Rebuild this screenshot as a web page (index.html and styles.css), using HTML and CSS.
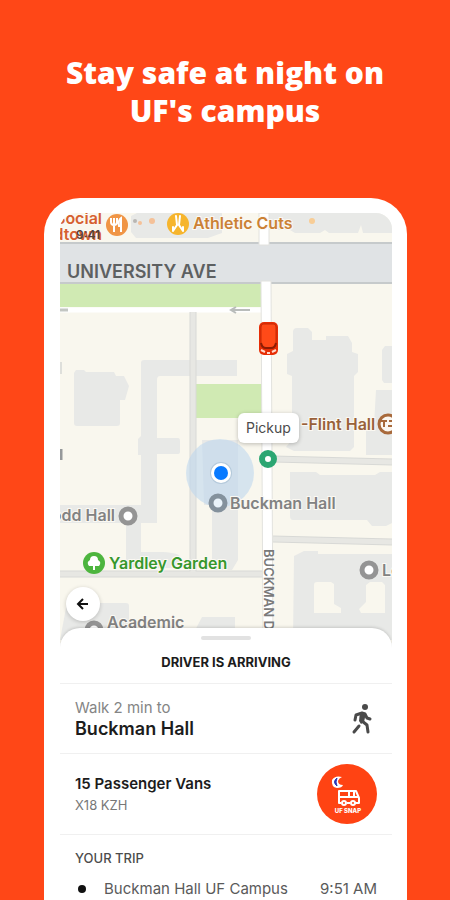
FILE: index.html
```html
<!DOCTYPE html>
<html lang="en">
<head>
<meta charset="utf-8">
<meta name="viewport" content="width=device-width, initial-scale=1">
<title>Stay safe at night on UF's campus</title>
<link rel="stylesheet" href="styles.css">
</head>
<body>
<main class="promo">
  <h1 class="headline">Stay safe at night on UF's campus</h1>
  <section class="phone">
    <div class="screen">
      <div class="map">
        <svg class="map-art" viewBox="60 213 332 430" preserveAspectRatio="xMidYMin slice" role="img" aria-label="Campus map">
          <rect x="0" y="200" width="500" height="460" fill="#f9f7ee"/>
          <!-- buildings -->
          <g fill="#e8e9e7">
            <path d="M137 213H222V233L208 238H136L131 232V216Z"/>
            <path d="M267 213H392V233H363L361 225L358 233H329L325 230L320 233H295L290 230H267Z"/>
            <path d="M76 370H84L86 372H114L116 376H124L129 386L125 400H120V423Q120 426 117 426H77Q74 426 74 423V373Z"/>
            <path d="M144 360H237V376H160Q157 376 157 380V438H178Q180 438 180 441V452Q180 454 177 454H157V523H141V552H163Q180 553 180 557V568H126V523H60V505H141V455H138V439L141 436V363Q141 360 144 360Z"/>
            <path d="M202 440H238V560L232 570H212V505H204Z"/>
            <path d="M293 332Q293 328 297 328H308L312 332V340H326V336H348L352 343V352L358 354V372L354 376V447L350 451H294L286 447L292 440V376L287 374V354L293 351Z"/>
            <path d="M382 350L385 346H392V383H384L382 380Z"/>
            <path d="M376 390H392V455H366V427L374 425Z"/>
            <path d="M290 472H316L320 475H375L380 472H392V523L386 526H372L367 520H293Q290 520 290 516Z"/>
            <path fill-rule="evenodd" d="M294 556L304 551H318V554H392V640H293ZM317 582Q314 582 314 585V613H341V608L334 604V584L331 582ZM370 582L366 585V602L359 609L361 613H385V585L382 582Z"/>
            <path d="M66 608Q66 603 71 603H126Q129 603 129 606V640H60Z"/>
            <path d="M202 617H235V640H190Z"/>
          </g>
          <!-- lawns -->
          <path d="M60 283H261V307H60Z" fill="#d0eab3"/>
          <path d="M196 384H263V418H196Z" fill="#d0eab3"/>
          <!-- paths -->
          <path d="M60 310H262" stroke="#fff" stroke-width="5"/>
          <path d="M60 310H68" stroke="#c3c6c2" stroke-width="3"/>
          <g fill="none" stroke="#d8d9d6" stroke-width="7">
            <path d="M193 312V574"/><path d="M60 574H263"/><path d="M273 459L392 462"/><path d="M273 539L392 542"/>
          </g>
          <g fill="none" stroke="#e7e7e3" stroke-width="5">
            <path d="M193 312V574"/><path d="M60 574H263"/><path d="M273 459L392 462"/><path d="M273 539L392 542"/>
          </g>
          <!-- avenue -->
          <path d="M60 244H392V283H60Z" fill="#e0e3e5"/>
          <path d="M60 243H392M60 283H392" stroke="#c6cacb" stroke-width="2"/>
          <!-- Buckman Drive -->
          <path d="M259 213H269V245H259ZM261 281H271L273 640H263Z" fill="#fff" stroke="#e2e2de"/>
          <path d="M60 449V460" stroke="#96999a" stroke-width="5"/>
          <path d="M60 362V374" stroke="#dedfdb" stroke-width="4"/>
          <path d="M250 310H232M236 307L231 310L236 313" fill="none" stroke="#b9bcba" stroke-width="2"/>

          <!-- location halo -->
          <circle cx="220" cy="473" r="34" fill="#b9d5ee" fill-opacity=".55"/>

          <!-- place markers -->
          <g class="place place-food">
            <text x="102" y="224" text-anchor="end">Social</text>
            <text x="102" y="240" text-anchor="end">dtown</text>
          </g>
          <text class="clock" x="76" y="239">9:41</text>
          <circle cx="117" cy="225" r="11" fill="#f09545"/>
          <path d="M114 218V232M111 218V222Q111 225 114 225Q117 225 117 222V218M121 232V218Q118 220 119 226H121" fill="none" stroke="#fff" stroke-width="2"/>
          <circle cx="135" cy="221" r="2" fill="#b9b6b2"/><circle cx="140" cy="223" r="2" fill="#f5c198"/><circle cx="152" cy="221" r="3" fill="#f5c198"/><circle cx="312" cy="221" r="3" fill="#f8cd96"/>
          <circle cx="178" cy="224" r="11" fill="#f6b52d"/>
          <path d="M176 216L177 225L173 231M180 216L179 225L183 231M173 227V231M183 227V231" fill="none" stroke="#fff" stroke-width="2" stroke-linecap="round"/>
          <text class="place place-shop" x="193" y="229">Athletic Cuts</text>
          <text class="road" x="67" y="278">UNIVERSITY AVE</text>
          <text class="street" transform="translate(264 549) rotate(90)">BUCKMAN DR</text>

          <text class="place place-hall" x="301" y="430">-Flint Hall</text>
          <circle cx="388" cy="424" r="9" fill="#fbf7f1" stroke="#a8693b" stroke-width="3"/>
          <path d="M381 421H387M384 421V427M388 426H394M389 421H394" stroke="#a8693b" stroke-width="2"/>
          <g class="place place-gray">
            <text x="230" y="509">Buckman Hall</text>
            <text x="115" y="521" text-anchor="end">Rodd Hall</text>
            <text x="107" y="628">Academic</text>
            <text x="382" y="576">Leigh</text>
          </g>
          <g fill="#fff" stroke="#949494" stroke-width="5">
            <circle cx="128" cy="516" r="7"/><circle cx="369" cy="570" r="7"/><circle cx="94" cy="630" r="7"/>
            <circle cx="218" cy="503" r="7" stroke="#84919c" fill="#eaf3fa"/>
          </g>
          <text class="place place-garden" x="109" y="569">Yardley Garden</text>
          <circle cx="94" cy="563" r="11" fill="#4db53e"/>
          <path d="M89 566Q86 562 90 560Q90 556 94 556Q98 556 98 560Q102 562 99 566H95V570H93V566Z" fill="#fff"/>

          <!-- rider position -->
          <circle cx="221" cy="473" r="11" fill="#8da9c4" fill-opacity=".4"/>
          <circle cx="221" cy="473" r="10" fill="#fff"/>
          <circle cx="221" cy="473" r="7" fill="#087aff"/>

          <!-- vehicle -->
          <rect x="259" y="322" width="19" height="33" rx="5" fill="#e62d05"/>
          <path d="M263 324H274Q276 324 276 327V344Q276 348 272 348H265Q261 348 261 344V327Q261 324 263 324Z" fill="#ff4a18" stroke="#c42a06"/>
          <path d="M261 343Q262 348 266 348H271Q275 348 276 343" fill="none" stroke="#8c1c04" stroke-width="2"/>
          <path d="M261 350L265 352M272 352L276 350M267 353H270" fill="none" stroke="#ffd9cd" stroke-width="2"/>

          <!-- pickup stop -->
          <circle cx="268" cy="459" r="6" fill="#fff" stroke="#2ba672" stroke-width="6"/>
        </svg>
        <span class="pickup">Pickup</span>
        <button class="back" type="button" aria-label="Back">
          <svg viewBox="0 0 14 14" width="14" height="14"><path d="M12 7H2M7 2L2 7L7 12" fill="none" stroke="#111" stroke-width="2"/></svg>
        </button>
      </div>

      <div class="sheet">
        <header class="sheet-head">
          <span class="handle"></span>
          <h2 class="status">DRIVER IS ARRIVING</h2>
        </header>
        <div class="row row-walk">
          <div>
            <p class="hint">Walk 2 min to</p>
            <p class="stop">Buckman Hall</p>
          </div>
          <svg class="walker" viewBox="0 0 24 32" width="24" height="32" aria-hidden="true">
            <circle cx="15" cy="4" r="3" fill="#4a4a4a"/>
            <g fill="none" stroke="#4a4a4a" stroke-width="3" stroke-linejoin="round" stroke-linecap="round">
              <path d="M5 17L6 12L12 10L15 11L17 15L20 16"/>
              <path d="M12 18L17 22L18 29M9 23L4 29"/>
            </g>
            <path d="M10 9L16 10L14 19L11 21L9 18Z" fill="#4a4a4a"/>
          </svg>
        </div>
        <div class="row row-van">
          <div>
            <p class="vehicle">15 Passenger Vans</p>
            <p class="plate">X18 KZH</p>
          </div>
          <svg class="badge" viewBox="0 0 60 60" width="60" height="60" role="img" aria-label="UF SNAP">
            <circle cx="30" cy="30" r="30" fill="#ff4313"/>
            <path d="M25 13Q18 11 15 16Q14 23 20 24Q25 24 26 21Q21 21 21 17Q22 14 25 13Z" fill="#fff"/>
            <path d="M20 14Q15 18 20 22Q18 18 20 14Z" fill="#2a35b8" stroke="#2a35b8"/>
            <g fill="none" stroke="#fff" stroke-width="2" stroke-linejoin="round">
              <path d="M24 39H22V27H39L42 34V39H38M33 39H30M22 33H41M32 27V33M37 27V33"/>
              <circle cx="27" cy="39" r="2"/><circle cx="36" cy="39" r="2"/>
            </g>
            <text class="badge-text" x="31" y="49" text-anchor="middle">UF SNAP</text>
          </svg>
        </div>
        <section class="trip">
          <h3 class="trip-title">YOUR TRIP</h3>
          <div class="leg">
            <span class="dot"></span>
            <span class="leg-name">Buckman Hall UF Campus</span>
            <time class="leg-time">9:51 AM</time>
          </div>
        </section>
      </div>
    </div>
  </section>
</main>
</body>
</html>
```
FILE: styles.css
```css
* { box-sizing: border-box; }

body {
  margin: 0;
  background: #ff4717;
  color: #1c1c1c;
  font-family: Inter, "Liberation Sans", sans-serif;
}

h1, h2, h3, p { margin: 0; }

.promo {
  display: flex;
  flex-direction: column;
  height: 100vh;
  overflow: hidden;
}

.headline {
  padding: 54px 48px 68px;
  color: #fff;
  font-family: "Open Sans", "Liberation Sans", sans-serif;
  font-size: 30px;
  font-weight: 800;
  line-height: 38px;
  text-align: center;
}

.phone {
  flex: 1;
  margin: 0 43px 0 44px;
  padding: 15px 15px 0 16px;
  border-radius: 36px 36px 0 0;
  background: #fff;
}

.screen {
  overflow: hidden;
  border-radius: 16px 16px 0 0;
}

.map { position: relative; }

.map-art {
  display: block;
  width: 100%;
  height: 430px;
}

.place {
  font-size: 16px;
  font-weight: 600;
  stroke: #fbf9f3;
  stroke-width: 2px;
  paint-order: stroke;
}
.place-food { fill: #d66030; }
.place-shop { fill: #cb8135; }
.place-hall { fill: #99613a; }
.place-gray { fill: #828282; }
.place-garden { fill: #37972c; }
.clock { fill: #55423c; font-size: 12px; font-weight: 600; }
.road { fill: #5d6061; font-size: 18px; font-weight: 600; }
.street { fill: #7a7a7a; font-size: 13px; font-weight: 600; }

.pickup {
  position: absolute;
  top: 200px;
  left: 178px;
  padding: 0 8px;
  border-radius: 6px;
  background: #fff;
  box-shadow: 0 1px 4px rgba(0, 0, 0, .25);
  color: #4b4b4b;
  font-size: 14px;
  line-height: 30px;
}

.back {
  position: absolute;
  bottom: 22px;
  left: 6px;
  display: grid;
  place-items: center;
  width: 34px;
  height: 34px;
  padding: 0;
  border: 0;
  border-radius: 50%;
  background: #fff;
  box-shadow: 0 1px 4px rgba(0, 0, 0, .2);
}

.sheet {
  position: relative;
  margin-top: -15px;
  border-radius: 20px 20px 0 0;
  background: #fff;
  box-shadow: 0 -1px 3px rgba(0, 0, 0, .15);
}

.sheet-head {
  display: flex;
  flex-direction: column;
  align-items: center;
  gap: 14px;
  height: 56px;
  padding-top: 8px;
  border-bottom: 1px solid #f0f0f0;
}

.handle {
  width: 50px;
  height: 4px;
  border-radius: 2px;
  background: #e2e2e2;
}

.status {
  font-size: 13px;
  font-weight: 700;
  line-height: 16px;
}

.row {
  display: flex;
  align-items: center;
  justify-content: space-between;
  padding: 0 15px;
  border-bottom: 1px solid #f0f0f0;
}
.row-walk { height: 70px; }
.row-van { height: 81px; }

.hint { color: #858585; font-size: 15px; line-height: 20px; }
.stop { font-size: 18px; font-weight: 600; line-height: 22px; }
.vehicle { font-size: 15px; font-weight: 600; line-height: 22px; }
.plate { color: #777; font-size: 13px; line-height: 20px; }

.walker { margin-right: 3px; }
.badge-text { fill: #fff; font-size: 6px; font-weight: 800; }

.trip { padding: 15px; }

.trip-title {
  color: #4c4c4c;
  font-size: 13px;
  font-weight: 500;
  line-height: 16px;
}

.leg {
  display: flex;
  align-items: center;
  padding-top: 13px;
  color: #5a5a5a;
  font-size: 15px;
  line-height: 20px;
}

.dot {
  width: 8px;
  height: 8px;
  margin: 0 18px 0 3px;
  border-radius: 50%;
  background: #111;
}

.leg-time { margin-left: auto; }
```
